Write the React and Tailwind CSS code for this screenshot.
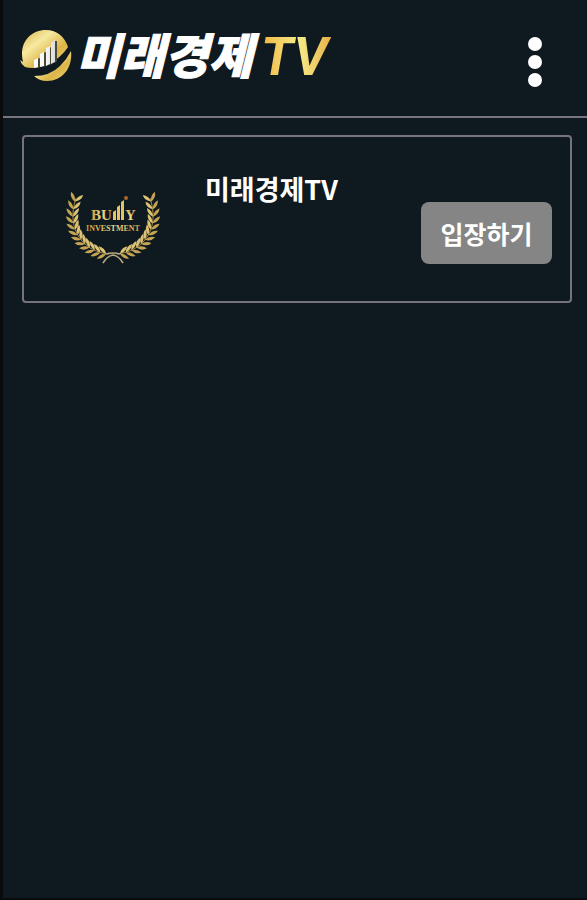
import React from 'react';

const channels = [{ id: 1, name: '미래경제TV' }];

// Stem of one laurel branch, from the root at the bottom to the tip
const stem = [[44, 65], [20, 63], [0, 42], [11, 9]];

const pointAt = (t, axis) => {
  const u = 1 - t;
  const [a, b, c, d] = stem.map((p) => p[axis]);
  return u * u * u * a + 3 * u * u * t * b + 3 * u * t * t * c + t * t * t * d;
};

const angleAt = (t) => {
  const dx = pointAt(t + 0.01, 0) - pointAt(t - 0.01, 0);
  const dy = pointAt(t + 0.01, 1) - pointAt(t - 0.01, 1);
  return (Math.atan2(dy, dx) * 180) / Math.PI;
};

const leaves = Array.from({ length: 12 }, (_, i) => 0.04 + i * 0.084).map((t) => ({
  x: pointAt(t, 0),
  y: pointAt(t, 1),
  angle: angleAt(t)
}));

const LaurelBranch = () => (
  <g>
    <path d="M44 65C20 63 0 42 11 9" fill="none" stroke="#a98a3c" strokeWidth="1" />
    {leaves.map((leaf, index) => (
      <g key={index} transform={`translate(${leaf.x} ${leaf.y}) rotate(${leaf.angle})`}>
        <path d="M0 0Q4 -5 10 -3.4Q6 1.2 0 0Z" transform="rotate(-18)" fill="#c4a452" />
        <path d="M0 0Q4 5 10 3.4Q6 -1.2 0 0Z" transform="rotate(18)" fill="#dcc374" />
      </g>
    ))}
  </g>
);

const BullyLogo = () => (
  <svg viewBox="0 0 96 76" className="h-[76px] w-24 shrink-0" role="img" aria-label="Bully Investment">
    <defs>
      <linearGradient id="bully-gold" x1="0" y1="0" x2="1" y2="0">
        <stop offset="0" stopColor="#c69a3a" />
        <stop offset="0.5" stopColor="#f0dc8c" />
        <stop offset="1" stopColor="#c9a046" />
      </linearGradient>
    </defs>
    <LaurelBranch />
    <g transform="translate(96 0) scale(-1 1)">
      <LaurelBranch />
    </g>
    <path d="M38 74Q42 67 48 66Q54 67 58 74M41 65Q48 63 55 65" fill="none" stroke="#b9a880" strokeWidth="1.6" />
    <g fill="url(#bully-gold)" className="font-['Liberation_Serif',serif] font-bold">
      <text x="26" y="31" fontSize="15">BU</text>
      <text x="60" y="31" fontSize="15">Y</text>
      <text x="48" y="42" fontSize="8" textAnchor="middle">INVESTMENT</text>
    </g>
    <path d="M48 31V23L51 21V31ZM52 31V18L55 16V31ZM56 31V13L59 11V31Z" fill="#e3c365" />
    <circle cx="61" cy="9" r="2" fill="#a8682c" />
  </svg>
);

const GlobeMark = () => (
  <svg viewBox="0 0 52 54" className="h-[54px] w-[52px] shrink-0" aria-hidden="true">
    <defs>
      <linearGradient id="globe-gold" x1="0" y1="0" x2="1" y2="1">
        <stop offset="0" stopColor="#d9ae3f" />
        <stop offset="0.35" stopColor="#f6e9a0" />
        <stop offset="0.65" stopColor="#dcb547" />
        <stop offset="1" stopColor="#f0da7c" />
      </linearGradient>
      <linearGradient id="globe-bars" x1="0" y1="0" x2="1" y2="0">
        <stop offset="0" stopColor="#ffffff" />
        <stop offset="0.6" stopColor="#f4f4f4" />
        <stop offset="1" stopColor="#dcdcdc" />
      </linearGradient>
    </defs>
    <path
      d="M0 31Q1 35 5 38Q16 41 28 35Q41 29 48 18C45 8 37 1 26 1C12 1 2 11 2 25Q2 29 3 33Z"
      fill="url(#globe-gold)"
    />
    <path d="M14 47Q30 47 40 37Q47 30 51 22C53 38 43 52 27 52Q19 52 14 47Z" fill="url(#globe-gold)" />
    <path d="M17 38V30L20 29V38ZM23 38V24L26 23V37ZM29 36V19L32 18V35ZM35 34V12L37 12V32Z" fill="#4a4836" />
    <path d="M14 39V31L18 29V38ZM20 38V25L24 23V37ZM26 37V19L30 17V35ZM31 35V14L35 11V33Z" fill="url(#globe-bars)" />
  </svg>
);

const Header = () => (
  <header className="flex h-[118px] items-start justify-between border-b-2 border-[#77757d] pt-[29px] pr-[45px] pl-[17px]">
    <a href="#home" className="flex items-start gap-1" aria-label="미래경제 TV">
      <GlobeMark />
      <span className="flex items-start gap-2 italic">
        <span className="text-[48px] leading-12 font-black text-white [-webkit-text-stroke:1px_white]">미래경제</span>
        <span className="bg-linear-to-r from-[#efb63e] via-[#f6ec88] to-[#e3a93a] bg-clip-text pr-2 font-['Liberation_Sans_Narrow',Roboto,sans-serif] text-[54px] leading-14 font-bold text-transparent">
          TV
        </span>
      </span>
    </a>
    <button type="button" aria-label="메뉴" className="flex flex-col gap-1 pt-2">
      <span className="size-[14px] rounded-full bg-white" />
      <span className="size-[14px] rounded-full bg-white" />
      <span className="size-[14px] rounded-full bg-white" />
    </button>
  </header>
);

const ChannelCard = ({ channel }) => (
  <li className="flex h-[168px] items-center rounded border-2 border-[#77737b] pr-[18px] pl-[41px]">
    <div className="pt-4">
      <BullyLogo />
    </div>
    <h2 className="ml-11 flex-1 self-start pt-8 text-[27px] leading-10 font-bold">{channel.name}</h2>
    <button
      type="button"
      className="mt-7 h-[62px] w-[131px] shrink-0 rounded-lg bg-[#858585] text-[25px] leading-8 font-bold"
    >
      입장하기
    </button>
  </li>
);

const App = () => {
  return (
    <div className="min-h-screen border-b-2 border-l-3 border-[#0a0b0c] bg-[#0f1920] font-['Noto_Sans_CJK_KR',sans-serif] text-white">
      <Header />
      <main className="pt-[17px] pr-[15px] pl-[19px]">
        <ul className="flex flex-col gap-4">
          {channels.map((channel) => (
            <ChannelCard key={channel.id} channel={channel} />
          ))}
        </ul>
      </main>
    </div>
  );
};

export default App;
